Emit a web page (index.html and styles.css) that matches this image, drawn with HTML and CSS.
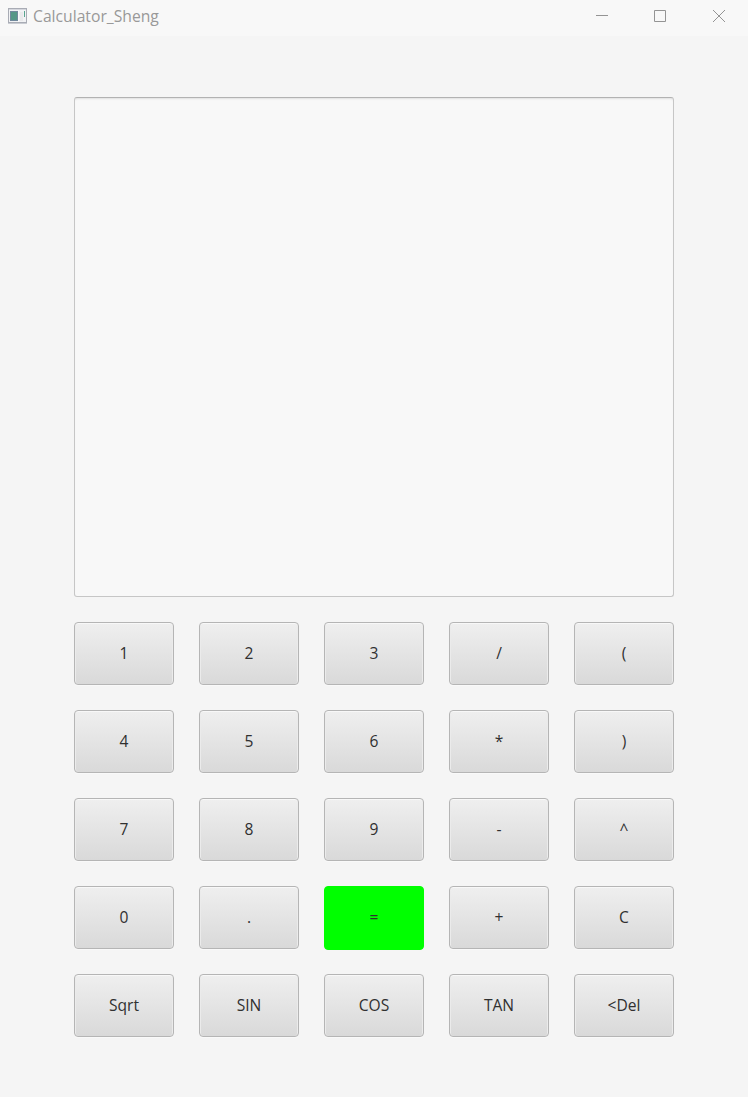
FILE: index.html
```html
<!DOCTYPE html>
<html lang="en">
<head>
<meta charset="utf-8">
<title>Calculator_Sheng</title>
<link rel="stylesheet" href="styles.css">
</head>
<body>
<div class="window">
  <header class="titlebar">
    <svg class="app-icon" width="19" height="16" viewBox="0 0 19 16">
      <rect x=".5" y=".5" width="18" height="14" fill="#f1f2f4" stroke="#a9acb5"/>
      <path d="M0 15.5h19" stroke="#c9ccd2"/>
      <rect x="1" y="1" width="17" height="1" fill="#d5d7de"/>
      <rect x="2" y="3" width="8" height="10" fill="#71899c"/>
      <rect x="3" y="4" width="6" height="8" fill="#559887"/>
      <path d="M10.5 2v12" stroke="#fafafa"/>
      <rect x="12" y="4" width="3" height="9" fill="#e9e9eb"/>
      <rect x="16" y="3" width="1" height="6" fill="#59a48e"/>
    </svg>
    <h1 class="title">Calculator_Sheng</h1>
    <div class="controls">
      <svg width="12" height="12" viewBox="0 0 12 12"><path d="M0 5.5h12"/></svg>
      <svg width="12" height="12" viewBox="0 0 12 12"><path d="M.5.5h11v11H.5z"/></svg>
      <svg class="close" width="12" height="12" viewBox="0 0 12 12"><path d="M0 0l12 12M12 0L0 12"/></svg>
    </div>
  </header>
  <main class="calculator">
    <div class="display"></div>
    <div class="keys">
      <button class="key">1</button><button class="key">2</button><button class="key">3</button><button class="key">/</button><button class="key">(</button>
      <button class="key">4</button><button class="key">5</button><button class="key">6</button><button class="key">*</button><button class="key">)</button>
      <button class="key">7</button><button class="key">8</button><button class="key">9</button><button class="key">-</button><button class="key">^</button>
      <button class="key">0</button><button class="key">.</button><button class="key equals">=</button><button class="key">+</button><button class="key">C</button>
      <button class="key">Sqrt</button><button class="key">SIN</button><button class="key">COS</button><button class="key">TAN</button><button class="key">&lt;Del</button>
    </div>
  </main>
</div>
</body>
</html>
```
FILE: styles.css
```css
* { box-sizing: border-box; }
body {
  margin: 0;
  font-family: "Open Sans", "Noto Sans", sans-serif;
}
.window {
  width: 748px;
  height: 1097px;
  background: #f5f5f5;
  overflow: hidden;
}
.titlebar {
  display: flex;
  align-items: center;
  height: 36px;
  padding: 0 23px 4px 8px;
  background: #f8f8f8;
}
.app-icon { flex: none; }
.title {
  margin: 0 0 0 6px;
  font-size: 15.7px;
  font-weight: 400;
  line-height: 32px;
  color: #999;
}
.controls {
  display: flex;
  gap: 46px;
  margin-left: auto;
}
.controls svg {
  display: block;
  fill: none;
  stroke: #949494;
}
.controls .close { margin-left: 1px; }
.calculator { padding: 61px 74px 0; }
.display {
  height: 500px;
  border: 1px solid #c6c6c6;
  border-top-color: #b2b2b2;
  border-radius: 3px;
  background: #f8f8f8;
  box-shadow: inset 0 2px 2px -1px #e0e0e0;
}
.keys {
  display: grid;
  grid-template-columns: repeat(5, 100px);
  grid-auto-rows: 63px;
  gap: 25px;
  margin-top: 25px;
}
.key {
  padding: 0 0 2px;
  border: 1px solid #b5b5b5;
  border-radius: 4px;
  background: linear-gradient(#efefef, #d9d9d9);
  box-shadow: inset 0 1px #f8f8f8, inset 1px 0 #ebebeb, inset -1px 0 #ebebeb, 0 1px #f9f9f9;
  font: 400 15.6px/20px "Open Sans", "Noto Sans", sans-serif;
  color: #303030;
}
.equals {
  height: 64px;
  border-color: #0f0;
  background: #0f0;
  box-shadow: none;
}
```
